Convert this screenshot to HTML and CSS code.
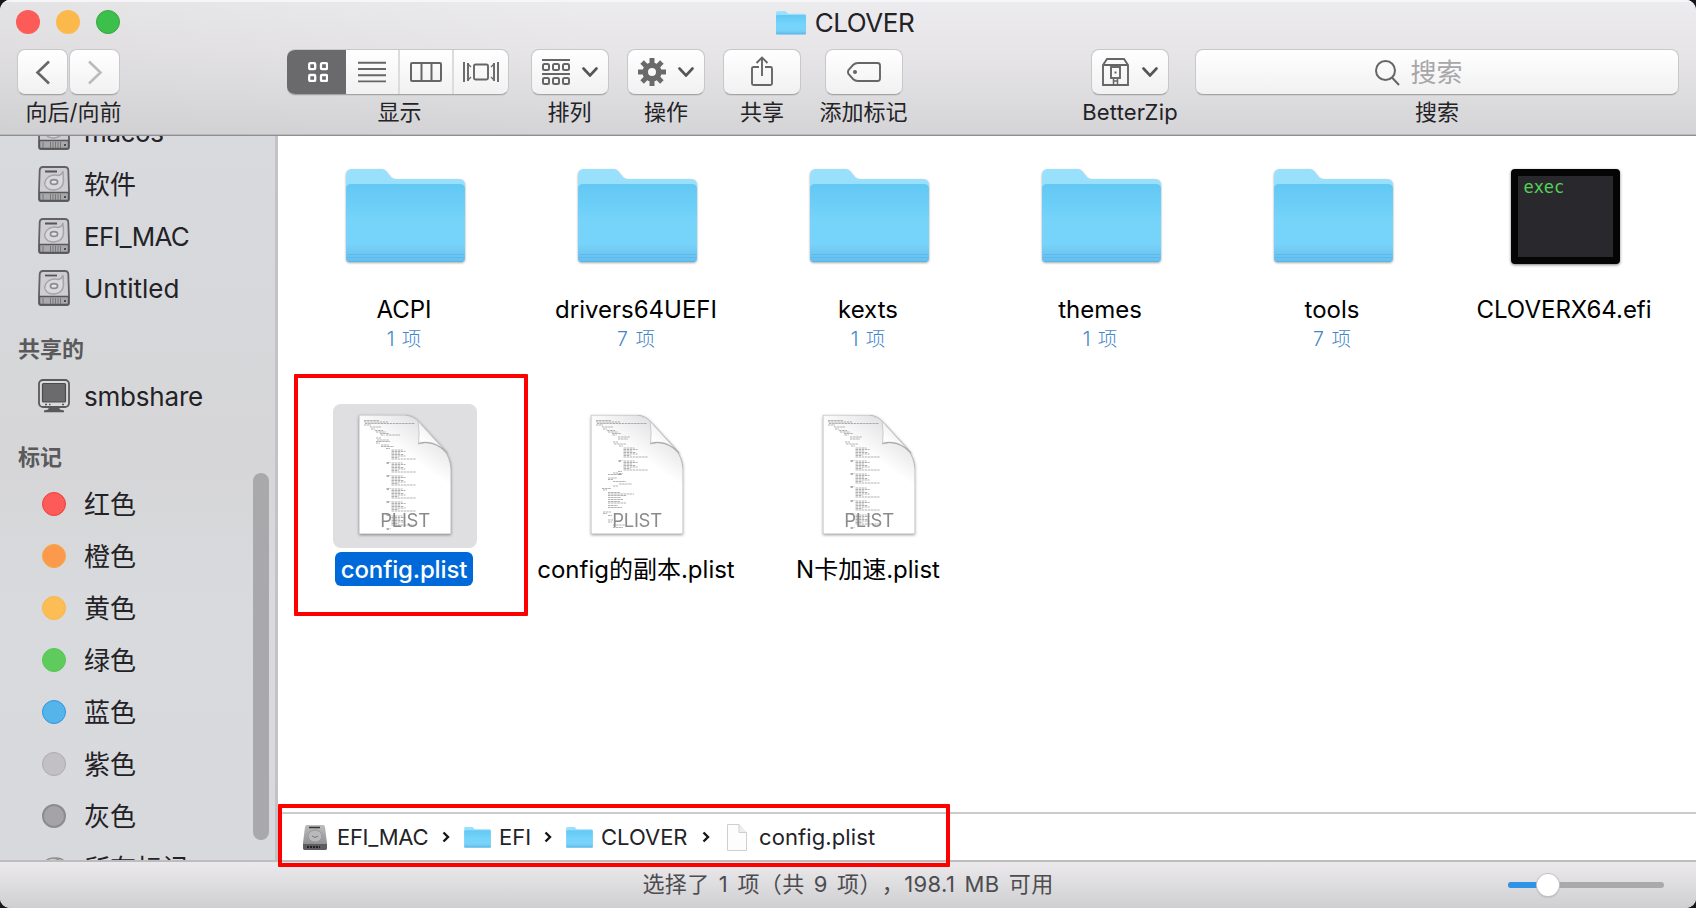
FILE: index.html
```html
<!DOCTYPE html>
<html lang="zh-CN">
<head>
<meta charset="utf-8">
<title>CLOVER</title>
<link rel="stylesheet" href="styles.css">
</head>
<body>
<svg class="defs" width="0" height="0" aria-hidden="true">
  <defs>
    <linearGradient id="folder-face" x1="0" y1="0" x2="0" y2="1">
      <stop offset="0" stop-color="#64c8f5"/><stop offset=".2" stop-color="#69cdf6"/><stop offset=".48" stop-color="#76d4fa"/><stop offset=".76" stop-color="#76d4fa"/><stop offset=".86" stop-color="#72caf3"/><stop offset="1" stop-color="#62bfee"/>
    </linearGradient>
    <linearGradient id="paper" x1=".85" y1="0" x2=".5" y2=".65">
      <stop offset="0" stop-color="#d2d0d2"/><stop offset=".28" stop-color="#e9e8ea"/><stop offset=".62" stop-color="#fff"/>
    </linearGradient>
    <linearGradient id="flap" x1="0" y1="1" x2=".6" y2=".3">
      <stop offset="0" stop-color="#dcdcdc"/><stop offset=".4" stop-color="#fff"/><stop offset="1" stop-color="#eee"/>
    </linearGradient>
    <linearGradient id="metal" x1="0" y1="0" x2="0" y2="1">
      <stop offset="0" stop-color="#bdbdbf"/><stop offset="1" stop-color="#858587"/>
    </linearGradient>
    <symbol id="folder" viewBox="0 0 119 94">
      <path d="M0 88V6q0-5 5-6h31q3 0 5 3l3 4q2 3 5 3h64q6 0 6 6v72z" fill="#98e0fc"/>
      <path d="M0 20q0-5 5-5h109q5 0 5 5v69q0 4-4 4H4q-4 0-4-4z" fill="url(#folder-face)"/>
      <path d="M1 85.500H118M1 88.500H118M2 92.500H117" stroke="#4fb0e8" stroke-width=".8" stroke-opacity=".7"/>
    </symbol>
    <symbol id="drive" viewBox="0 0 32 36">
      <path d="M5 1h22q3 0 3.300 3L31 25v8q0 2-2 2H3q-2 0-2-2v-8L1.700 4Q2 1 5 1z" fill="#cfcdd1" stroke="#626264" stroke-width="1.800"/>
      <path d="M1.500 26.500h29V33q0 1.500-1.500 1.500H3q-1.500 0-1.500-1.500z" fill="#a9a9ab" stroke="#58585a" stroke-width="1.400"/>
      <path d="M7 5.500h12" stroke="#555557" stroke-width="1.800"/>
      <path d="M25 5Q24 9 20 9.500Q16 8 11 10.500Q6 14 7 19Q9 24 16 24Q25 23 25.500 15Z" fill="#d9d8db" stroke="#a5a4a8" stroke-width="1.500"/>
      <ellipse cx="16" cy="16" rx="3.600" ry="2.400" fill="#e4e3e6" stroke="#8c8b8f" stroke-width="1.600"/>
      <path d="M5 28v6M12.500 28v6M15 28v6M17.500 28v6M20 28v6M22.500 28v6" stroke="#77777a" stroke-width="1"/>
      <path d="M26 30h2v2h-2z" fill="#4c4c4e"/>
    </symbol>
    <symbol id="sheet" viewBox="0 0 92 119">
      <path d="M0 0H46Q55 1 60 7L84 33Q91 42 92 54V119H0z" fill="url(#paper)" stroke="#bbb" stroke-width="1"/>
      <path d="M59 6Q61 18 59.500 29Q74 24 87 37L62 9.500z" fill="url(#flap)" stroke="#c2c2c4" stroke-width=".8"/>
      <path d="M59.500 28.500Q75 24 88 38" fill="none" stroke="#aaa" stroke-width="1.200"/>
    </symbol>
    <symbol id="chevron-down" viewBox="0 0 16 10"><path d="M1.500 1.500L8 8.500L14.500 1.500" fill="none" stroke="#555" stroke-width="2.600" stroke-linecap="round"/></symbol>
    <symbol id="crumb-arrow" viewBox="0 0 8 12"><path d="M1.500 1.500L6 6L1.500 10.500" fill="none" stroke="#161616" stroke-width="2.400"/></symbol>
    <path id="code-head" d="M5 5.500h15M5 7h24M6 8.500h50M5 10h7M11 12h11M12 14h4M16 15.500h8M17 17h10M21 18.500h9M21.500 20h4"/>
    <path id="code-block" d="M0 0h11M0 1.500h14M0 3h9M0 4.500h12M0 6h14M0 7.500h7M0 9h24M-5 12.500h4M-5 13.500h3"/>
  </defs>
</svg>

<div class="window">
  <header class="chrome">
    <div class="titlebar">
      <div class="lights"><i class="light close"></i><i class="light minimize"></i><i class="light zoom"></i></div>
      <div class="title"><svg class="title-folder"><use href="#folder"/></svg><span>CLOVER</span></div>
    </div>
    <div class="toolbar">
      <div class="tool nav">
        <div class="pair">
          <button class="btn"><svg width="48" height="44"><path d="M30 11L18.500 22L30 33" transform="translate(0,.5)" fill="none" stroke="#666" stroke-width="2.600"/></svg></button>
          <button class="btn"><svg width="48" height="44"><path d="M18 11L29.500 22L18 33" transform="translate(0,.5)" fill="none" stroke="#bbb" stroke-width="2.600"/></svg></button>
        </div>
        <span class="caption">向后/向前</span>
      </div>
      <div class="tool views">
        <div class="segments">
          <button class="seg active"><svg width="20" height="20" fill="none" stroke="#fff" stroke-width="2.300"><rect x="1.200" y="1.200" width="6" height="6" rx="1"/><rect x="13" y="1.200" width="6" height="6" rx="1"/><rect x="1.200" y="13" width="6" height="6" rx="1"/><rect x="13" y="13" width="6" height="6" rx="1"/></svg></button>
          <button class="seg"><svg width="28" height="22" stroke="#666" stroke-width="1.900"><path d="M0 1.800h28M0 8h28M0 14.200h28M0 20.400h28"/></svg></button>
          <button class="seg"><svg width="32" height="20" fill="none" stroke="#666" stroke-width="2"><rect x="1" y="1" width="30" height="18" rx="1"/><path d="M11.500 1v18M21.500 1v18"/></svg></button>
          <button class="seg"><svg width="36" height="20" fill="none" stroke="#666" stroke-width="1.900"><path d="M1 0v20M5 1v18M31 1v18M35 0v20"/><path d="M5 2l3 3M5 18l3-3M31 2l-3 3M31 18l-3-3" stroke-width="1.300"/><rect x="11" y="2.500" width="14" height="15" rx="1.500"/></svg></button>
        </div>
        <span class="caption">显示</span>
      </div>
      <div class="tool arrange">
        <button class="btn"><svg width="28" height="26" fill="none" stroke="#666" stroke-width="2"><path d="M0 1h28M0 15h28"/><rect x="1" y="5" width="6" height="6" rx="1.500"/><rect x="11" y="5" width="6" height="6" rx="1.500"/><rect x="21" y="5" width="6" height="6" rx="1.500"/><rect x="1" y="19" width="6" height="6" rx="1.500"/><rect x="11" y="19" width="6" height="6" rx="1.500"/><rect x="21" y="19" width="6" height="6" rx="1.500"/></svg><svg class="down"><use href="#chevron-down"/></svg></button>
        <span class="caption">排列</span>
      </div>
      <div class="tool action">
        <button class="btn"><svg width="28" height="28" viewBox="-14 -14 28 28"><g stroke="#6a6a6a" stroke-width="5"><path d="M0-14V-6M0 14V6M-14 0H-6M14 0H6M-9.900-9.900L-5-5M9.900 9.900L5 5M-9.900 9.900L-5 5M9.900-9.900L5-5"/></g><circle r="6.800" fill="none" stroke="#6a6a6a" stroke-width="5.600"/></svg><svg class="down"><use href="#chevron-down"/></svg></button>
        <span class="caption">操作</span>
      </div>
      <div class="tool share">
        <button class="btn"><svg width="22" height="30" fill="none" stroke="#666" stroke-width="1.900"><path d="M8 11H2.500Q1 11 1 12.500V27.500Q1 29 2.500 29H19.500Q21 29 21 27.500V12.500Q21 11 19.500 11H14M11 20V1.500M5.500 7L11 1.500L16.500 7"/></svg></button>
        <span class="caption">共享</span>
      </div>
      <div class="tool tag">
        <button class="btn"><svg width="34" height="20" fill="none" stroke="#666" stroke-width="1.900"><path d="M11 1H30.500Q33 1 33 3.500V16.500Q33 19 30.500 19H11Q8 19 6 17L1.500 12Q.5 10 1.500 8L6 3Q8 1 11 1z"/><circle cx="8" cy="10" r="2" fill="#666" stroke="none"/></svg></button>
        <span class="caption">添加标记</span>
      </div>
      <div class="tool zip">
        <button class="btn"><svg width="27" height="28" fill="none" stroke="#666" stroke-width="1.900"><path d="M1 27V7L5 1H22L26 7V27zM1 7H26"/><rect x="9" y="9" width="9" height="11"/><path d="M11.500 20v7M15.500 20v7M11.500 23h4" stroke-width="1.500"/><path d="M12.500 13.500h2v2h-2z" fill="#666" stroke="none"/></svg><svg class="down"><use href="#chevron-down"/></svg></button>
        <span class="caption latin">BetterZip</span>
      </div>
      <div class="tool search">
        <div class="field"><svg width="25" height="26" fill="none" stroke="#666" stroke-width="2"><circle cx="10.500" cy="10.500" r="9.500"/><path d="M17 17.500l7 7.500"/></svg><span>搜索</span></div>
        <span class="caption">搜索</span>
      </div>
    </div>
  </header>

  <main class="body">
    <aside class="sidebar">
      <ul class="list">
        <li class="row"><svg class="drive"><use href="#drive"/></svg><span class="macos">macos</span></li>
        <li class="row"><svg class="drive"><use href="#drive"/></svg><span>软件</span></li>
        <li class="row"><svg class="drive"><use href="#drive"/></svg><span class="efi">EFI_MAC</span></li>
        <li class="row"><svg class="drive"><use href="#drive"/></svg><span>Untitled</span></li>
        <li class="group">共享的</li>
        <li class="row"><svg class="drive" viewBox="0 0 32 36"><rect x="1" y="2" width="30" height="27" rx="4" fill="#dad9dc" stroke="#59595b" stroke-width="1.800"/><rect x="4.500" y="5.500" width="23" height="18.500" rx="1" fill="#6b6b6d" stroke="#4b4b4d" stroke-width="1.200"/><path d="M7 26.500h2M11 26.500h1.500M24 26.500h2" stroke="#555" stroke-width="1.500"/><path d="M11 29.500h10l1 2 4 1v1.800H6v-1.800l4-1z" fill="#59595b"/></svg><span class="smb">smbshare</span></li>
        <li class="group">标记</li>
        <li class="row"><i class="dot red"></i><span>红色</span></li>
        <li class="row"><i class="dot orange"></i><span>橙色</span></li>
        <li class="row"><i class="dot yellow"></i><span>黄色</span></li>
        <li class="row"><i class="dot green"></i><span>绿色</span></li>
        <li class="row"><i class="dot blue"></i><span>蓝色</span></li>
        <li class="row"><i class="dot purple"></i><span>紫色</span></li>
        <li class="row"><i class="dot gray"></i><span>灰色</span></li>
        <li class="row"><svg class="all" width="26" height="24" fill="#c9c8cb" stroke="#8e8e90" stroke-width="1.600"><circle cx="15" cy="12" r="10"/><circle cx="11" cy="12" r="10"/></svg><span>所有标记…</span></li>
      </ul>
      <div class="scroller"></div>
    </aside>

    <section class="content">
      <div class="files">
        <div class="file"><div class="thumb"><svg class="folder"><use href="#folder"/></svg></div><span class="name">ACPI</span><span class="count">1 项</span></div>
        <div class="file"><div class="thumb"><svg class="folder"><use href="#folder"/></svg></div><span class="name">drivers64UEFI</span><span class="count">7 项</span></div>
        <div class="file"><div class="thumb"><svg class="folder"><use href="#folder"/></svg></div><span class="name">kexts</span><span class="count">1 项</span></div>
        <div class="file"><div class="thumb"><svg class="folder"><use href="#folder"/></svg></div><span class="name">themes</span><span class="count">1 项</span></div>
        <div class="file"><div class="thumb"><svg class="folder"><use href="#folder"/></svg></div><span class="name">tools</span><span class="count">7 项</span></div>
        <div class="file"><div class="thumb"><div class="exec">exec</div></div><span class="name">CLOVERX64.efi</span></div>

        <div class="file selected">
          <div class="thumb"><svg class="doc" viewBox="0 0 92 119"><use href="#sheet" width="92" height="119"/><g class="code"><use href="#code-head"/><path d="M27 20h14M17 23h5M18 25h12M17 26.500h14M17 28h4M22 30h8M22 31.500h13M27 33.500h4"/><use href="#code-block" x="32.500" y="35"/><use href="#code-block" x="32.500" y="48"/><use href="#code-block" x="32.500" y="61"/><use href="#code-block" x="32.500" y="74"/><use href="#code-block" x="32.500" y="87"/><use href="#code-block" x="32.500" y="101"/></g><text x="46" y="112">PLIST</text></svg></div>
          <span class="name">config.plist</span>
        </div>
        <div class="file">
          <div class="thumb"><svg class="doc" viewBox="0 0 92 119"><use href="#sheet" width="92" height="119"/><g class="code"><use href="#code-head"/><path d="M27 22h12M27 24h10M22 27h5M23 29h12M28 31h4"/><use href="#code-block" x="32.500" y="33"/><use href="#code-block" x="32.500" y="46"/><path d="M27 56.500h4M22 58h5M17 59.500h14M17 63h9M17 64.500h5M22 66.500h13M28 69h13M22 71h5M11 73.500h9M12 75h4M17 77.500h12M17 79h26M17 80.500h18M17 82.500h13M17 84.500h15M17 86.500h12M17 88h18M17 90.500h10M17 92.500h14M12 97h8M12 98.500h4M17 100.500h4M17 105h5M17 107h4M22 110h12M22 112.500h10"/></g><text x="46" y="112">PLIST</text></svg></div>
          <span class="name">config的副本.plist</span>
        </div>
        <div class="file">
          <div class="thumb"><svg class="doc" viewBox="0 0 92 119"><use href="#sheet" width="92" height="119"/><g class="code"><use href="#code-head"/><path d="M27 22h12M27 24h10M22 27h5M23 29h12M28 31h4"/><use href="#code-block" x="32.500" y="33"/><use href="#code-block" x="32.500" y="46"/><use href="#code-block" x="32.500" y="59"/><use href="#code-block" x="32.500" y="73"/><use href="#code-block" x="32.500" y="86"/><use href="#code-block" x="32.500" y="100"/></g><text x="46" y="112">PLIST</text></svg></div>
          <span class="name">N卡加速.plist</span>
        </div>
        <div class="mark mark-file"></div>
      </div>
      <nav class="path">
        <svg class="p-drive" viewBox="0 0 24 25"><path d="M4 0h16q2 0 2 2l2 16v5q0 2-2 2H2q-2 0-2-2v-5L2 2q0-2 2-2z" fill="url(#metal)"/><path d="M0 19h24v4q0 2-2 2H2q-2 0-2-2z" fill="#5d5d60"/><path d="M4 22h13" stroke="#222" stroke-width="2" stroke-dasharray="2 1"/><path d="M6 2.500h11" stroke="#333" stroke-width="1.500"/><ellipse cx="12" cy="11" rx="7" ry="6" fill="#b9b9bb" stroke="#98989a"/><path d="M9 11q3 3 6 0" stroke="#777" fill="none"/></svg>
        <span class="crumb c1">EFI_MAC</span><svg class="arrow"><use href="#crumb-arrow"/></svg>
        <svg class="p-folder"><use href="#folder"/></svg><span class="crumb c2">EFI</span><svg class="arrow"><use href="#crumb-arrow"/></svg>
        <svg class="p-folder"><use href="#folder"/></svg><span class="crumb c3">CLOVER</span><svg class="arrow"><use href="#crumb-arrow"/></svg>
        <svg class="p-doc" viewBox="0 0 20 27"><path d="M.5.500H12L19.500 9V26.500H.5z" fill="#fdfdfd" stroke="#cfcfcf"/><path d="M12 .5V8.500H19.500" fill="#eee" stroke="#cfcfcf"/></svg><span class="crumb c4">config.plist</span>
        <div class="mark mark-path"></div>
      </nav>
    </section>
  </main>

  <footer class="status">
    <span class="summary">选择了 1 项（共 9 项），198.1 MB 可用</span>
    <div class="slider"><div class="filled"></div><div class="knob"></div></div>
  </footer>
</div>
</body>
</html>
```

FILE: styles.css
```css
* { box-sizing: border-box; }
body {
  margin: 0;
  background: #17161c;
  font-family: Inter, "Noto Sans CJK SC", sans-serif;
  color: #232226;
  overflow: hidden;
}
.defs { position: absolute; }
button { padding: 0; border: 0; font: inherit; }
svg { display: block; flex: none; }
ul { list-style: none; margin: 0; padding: 0; }

.window {
  width: 1696px;
  height: 908px;
  display: flex;
  flex-direction: column;
  border-radius: 10px;
  overflow: hidden;
  background: #fff;
}

/* Title bar and toolbar */
.chrome {
  height: 136px;
  flex: none;
  background: linear-gradient(90deg, rgba(190,190,190,.18), rgba(255,255,255,0) 35%), linear-gradient(#ecebed, #e7e5e7 38%, #d4d4d6);
  border-bottom: 1px solid #8f8e92;
  box-shadow: inset 0 2px 0 #f6f5f7, inset 0 -1px 0 #b9b8bb;
}
.titlebar { height: 49px; display: grid; grid-template-columns: 1fr auto 1fr; padding: 0 16px; }
.lights { display: flex; gap: 16px; padding-top: 10px; }
.light { width: 24px; height: 24px; border-radius: 50%; }
.close { background: #fc5b57; }
.minimize { background: #fcb94b; }
.zoom { background: #3dbf4b; border: 1px solid #35a842; }
.title { display: flex; align-items: center; gap: 9px; height: 45px; font-size: 26px; letter-spacing: -.45px; margin-right: 6px; }
.title-folder { width: 30px; height: 24px; }

.toolbar { display: flex; padding-left: 17px; }
.tool { flex: none; display: flex; flex-direction: column; align-items: center; }
.caption { font-size: 22px; line-height: 32px; height: 32px; white-space: nowrap; margin-top: 1px; }
.btn, .segments, .field {
  height: 46px;
  border-radius: 8px;
  border: 1px solid #c8c7ca;
  border-bottom-color: #a4a3a6;
  background: linear-gradient(#fff, #f2f1f2);
  box-shadow: 0 1px 0 rgba(0,0,0,.06);
}
.btn { display: flex; align-items: center; justify-content: center; width: 100%; gap: 12px; }
.down { width: 16px; height: 10px; }
.nav { width: 103px; }
.pair { display: grid; grid-template-columns: 51px 51px; gap: 1px; width: 103px; }
.nav .caption { padding-left: 10px; }
.views { width: 222px; margin-left: 167px; }
.views .caption { padding-left: 3px; }
.segments { display: grid; grid-template-columns: 59px 54px 54px 1fr; width: 222px; border-left: 0; overflow: hidden; }
.seg { display: flex; align-items: center; justify-content: center; background: none; border-right: 2px solid #dcdbdd; }
.seg:last-child { border-right: 0; }
.seg.active { background: #6a6a6d; border-color: #6a6a6d; margin: -1px 0; padding-left: 5px; }
.arrange { width: 78px; margin-left: 22px; }
.action { width: 78px; margin-left: 18px; }
.share { width: 78px; margin-left: 18px; }
.tag { width: 78px; margin-left: 24px; }
.tag .caption, .arrange .caption { margin-right: 1px; }
.share svg { margin-top: -3px; }
.zip { width: 78px; margin-left: 188px; }
.zip .btn { gap: 13px; }
.latin { letter-spacing: .2px; }
.search { width: 484px; margin-left: 26px; }
.field { width: 100%; display: flex; align-items: center; justify-content: center; gap: 10px; font-size: 26px; color: #a7a6a9; padding: 1px 36px 0 0; line-height: 40px; }

/* Sidebar */
.body { flex: 1; min-height: 0; display: flex; }
.sidebar {
  position: relative;
  width: 278px;
  flex: none;
  overflow: hidden;
  background: linear-gradient(#d8dade, #d6d6d8 45%, #d8dadd 65%, #d8d9dc);
  border-right: 3px solid #c3c2c7;
}
.list { margin-top: -30px; font-size: 26px; }
.row { display: flex; align-items: center; height: 52px; padding-left: 38px; white-space: nowrap; }
.row span { margin-left: 14px; height: 52px; line-height: 54px; }
.row .efi { letter-spacing: -.75px; }
.row .smb { letter-spacing: -.2px; }
.row .macos { letter-spacing: -.4px; }
.drive { width: 32px; height: 36px; }
.group { height: 56px; padding: 16px 0 0 18px; font-size: 22px; font-weight: 600; line-height: 38px; color: #5a5a5d; }
.dot { width: 24px; height: 24px; border-radius: 50%; margin: 0 4px; border: 1px solid; }
.all { margin: 0 2px 0 4px; }
.red { background: #fc5b57; border-color: #ee3f3c; }
.orange { background: #fb9a4d; border-color: #f9a63f; }
.yellow { background: #fcbd55; border-color: #fcb647; }
.green { background: #5fcb5d; border-color: #52c951; }
.blue { background: #55b5ea; border-color: #2f96dd; }
.purple { background: #c2c0c5; border-color: #adabb0; }
.gray { background: #a4a4a6; border-color: #8c8c8e; border-width: 2px; }
.scroller { position: absolute; left: 253px; top: 337px; width: 16px; height: 367px; border-radius: 8px; background: #a9a9ab; }

/* Icon grid */
.content { flex: 1; min-width: 0; display: flex; flex-direction: column; }
.files {
  position: relative;
  flex: 1;
  display: grid;
  grid-template-columns: repeat(6, 232px);
  grid-auto-rows: 260px;
  align-content: start;
  padding: 8px 0 0 11px;
}
.file { display: flex; flex-direction: column; align-items: center; color: #000; }
.thumb { width: 144px; height: 144px; border-radius: 8px; display: flex; justify-content: center; align-items: center; flex: none; }
.folder { width: 119px; height: 94px; filter: drop-shadow(0 1.500px 1px rgba(0,0,0,.35)); }
.name { height: 34px; line-height: 35px; margin: 4px 2px 0 0; padding: 0 6px; border-radius: 6px; font-size: 24px; white-space: nowrap; }
.count { font-size: 19.500px; line-height: 26px; color: #4286c8; font-weight: 300; margin-right: 2px; word-spacing: 2px; }
.exec {
  width: 109px;
  height: 95px;
  border: 7px solid #050505;
  border-radius: 4px;
  background: #29282c;
  color: #55d058;
  font: 17px/22px "DejaVu Sans Mono", monospace;
  padding-left: 6px;
  letter-spacing: -.1px;
  box-shadow: 0 1px 3px rgba(0,0,0,.5);
}
.doc { width: 92px; height: 119px; margin-top: -4px; overflow: visible; filter: drop-shadow(0 1.500px 1.500px rgba(0,0,0,.4)); }
.doc text { font: 18.500px Inter, sans-serif; letter-spacing: -.3px; fill: #8b8b8d; text-anchor: middle; }
.code { fill: none; stroke: #8f8f92; stroke-width: .7; stroke-dasharray: 2.500 .6; }
.selected .thumb { background: #dfdee0; }
.selected .name { background: #0069d9; color: #fff; font-weight: 500; letter-spacing: -.15px; }

/* Red annotation frames */
.mark { position: absolute; border: 4px solid #fe0000; border-radius: 1px; }
.mark-file { left: 16px; top: 238px; width: 234px; height: 242px; }
.mark-path { left: 0; top: -10px; width: 672px; height: 63px; z-index: 1; }

/* Path bar */
.path { position: relative; height: 48px; flex: none; border-top: 2px solid #cbcacc; display: flex; align-items: center; padding: 2px 0 0 25px; font-size: 22px; }
.p-drive { width: 24px; height: 25px; }
.p-folder { width: 27px; height: 21px; }
.p-doc { width: 20px; height: 27px; }
.arrow { width: 8px; height: 12px; }
.crumb { flex: none; white-space: nowrap; }
.c1 { width: 115px; padding-left: 10px; letter-spacing: -.3px; }
.c2 { width: 53px; padding-left: 8px; }
.c3 { width: 109px; padding-left: 8px; }
.arrow + .p-folder { margin-left: 14px; }
.arrow + .p-doc { margin-left: 17px; }
.c4 { padding-left: 12px; letter-spacing: .1px; }
.path > svg, .crumb { margin-top: -2px; }

/* Status bar */
.status {
  height: 48px;
  flex: none;
  border-top: 2px solid #bdbcbf;
  background: linear-gradient(#ebe9eb, #cfcfd1);
  display: grid;
  grid-template-columns: 1fr auto 1fr;
  align-items: center;
  padding-bottom: 1px;
}
.summary {
  grid-column: 2;
  height: 44px;
  margin-top: -2px;
  font-size: 22px;
  line-height: 44px;
  letter-spacing: .4px;
  word-spacing: 2.600px;
  text-spacing-trim: space-all;
  color: #4d4c50;
  white-space: nowrap;
}
.slider { justify-self: end; width: 156px; height: 6px; margin-right: 32px; border-radius: 3px; background: #a9a9ab; display: flex; align-items: center; }
.filled { width: 29px; height: 6px; border-radius: 3px 0 0 3px; background: #2f94e6; }
.knob { width: 22px; height: 22px; border-radius: 50%; background: #fff; box-shadow: 0 0 0 1px #c4c3c6, 0 1px 2px rgba(0,0,0,.3); }
```
